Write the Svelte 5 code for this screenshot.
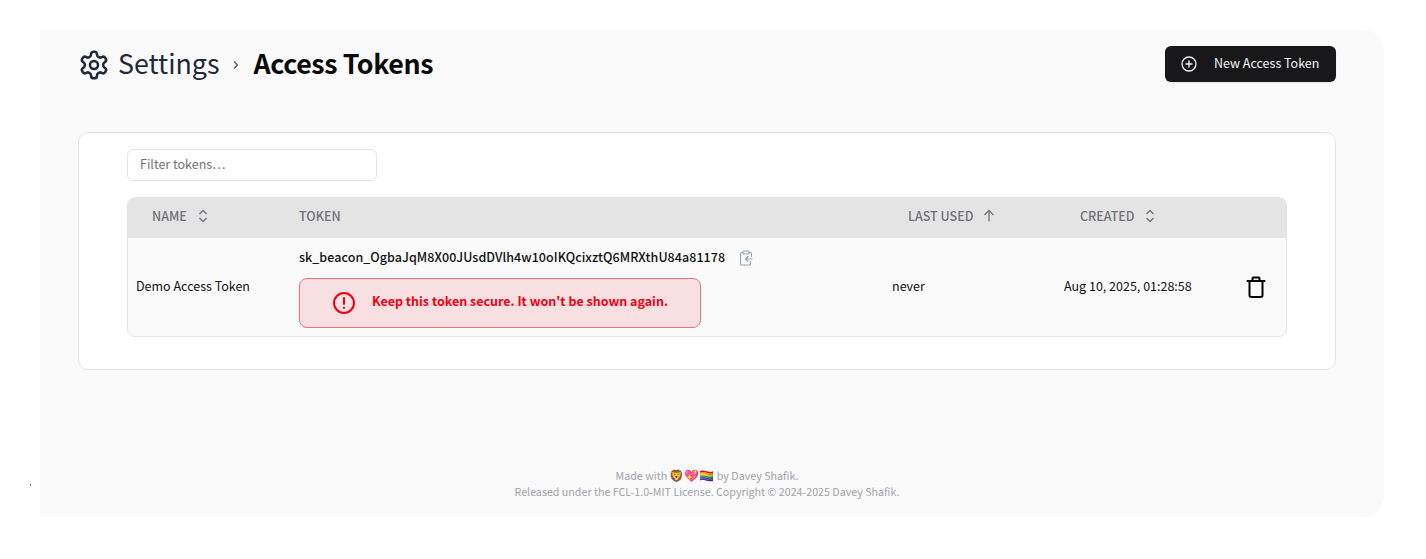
<script>
  const token = 'sk_beacon_OgbaJqM8X00JUsdDVlh4w10oIKQcixztQ6MRXthU84a81178';
</script>

<div class="page">
  <div class="rail"><span class="dot"></span></div>
  <main class="panel">
    <header class="topbar">
      <h1 class="crumbs">
        <svg class="gear" viewBox="0 0 24 24" fill="none" stroke="currentColor" stroke-width="1.9" stroke-linecap="round" stroke-linejoin="round" aria-hidden="true">
          <path d="M12.22 2h-.44a2 2 0 0 0-2 2v.18a2 2 0 0 1-1 1.73l-.43.25a2 2 0 0 1-2 0l-.15-.08a2 2 0 0 0-2.73.73l-.22.38a2 2 0 0 0 .73 2.73l.15.1a2 2 0 0 1 1 1.72v.51a2 2 0 0 1-1 1.74l-.15.09a2 2 0 0 0-.73 2.73l.22.38a2 2 0 0 0 2.73.73l.15-.08a2 2 0 0 1 2 0l.43.25a2 2 0 0 1 1 1.73V20a2 2 0 0 0 2 2h.44a2 2 0 0 0 2-2v-.18a2 2 0 0 1 1-1.73l.43-.25a2 2 0 0 1 2 0l.15.08a2 2 0 0 0 2.73-.73l.22-.39a2 2 0 0 0-.73-2.73l-.15-.08a2 2 0 0 1-1-1.74v-.5a2 2 0 0 1 1-1.74l.15-.09a2 2 0 0 0 .73-2.73l-.22-.38a2 2 0 0 0-2.73-.73l-.15.08a2 2 0 0 1-2 0l-.43-.25a2 2 0 0 1-1-1.73V4a2 2 0 0 0-2-2z"/>
          <circle cx="12" cy="12" r="3"/>
        </svg>
        <span class="parent">Settings</span>
        <svg class="chevron" viewBox="0 0 8 12" fill="none" stroke="currentColor" stroke-width="1.2" aria-hidden="true">
          <path d="M2 2.500 5.500 6 2 9.500"/>
        </svg>
        <span class="current">Access Tokens</span>
      </h1>
      <button class="new-btn" type="button">
        <svg class="plus" viewBox="0 0 16 16" fill="none" stroke="currentColor" stroke-width="1.3" stroke-linecap="round" aria-hidden="true">
          <circle cx="8" cy="8" r="7"/>
          <path d="M8 5v6M5 8h6"/>
        </svg>
        <span>New Access Token</span>
      </button>
    </header>

    <section class="card">
      <input class="filter" type="text" placeholder="Filter tokens…" />
      <div class="table-wrap">
        <table>
          <thead>
            <tr>
              <th class="c-name sortable">
                <span>Name</span>
                <svg viewBox="0 0 12 16" fill="none" stroke="currentColor" stroke-width="1.3" aria-hidden="true"><path d="m2.500 6 3.500-3.500L9.500 6M2.500 10 6 13.500 9.500 10"/></svg>
              </th>
              <th class="c-token">Token</th>
              <th class="c-used sortable">
                <span>Last Used</span>
                <svg viewBox="0 0 12 16" fill="none" stroke="currentColor" stroke-width="1.3" aria-hidden="true"><path d="M6 13.500v-11M1.500 7 6 2.500 10.500 7"/></svg>
              </th>
              <th class="c-created sortable">
                <span>Created</span>
                <svg viewBox="0 0 12 16" fill="none" stroke="currentColor" stroke-width="1.3" aria-hidden="true"><path d="m2.500 6 3.500-3.500L9.500 6M2.500 10 6 13.500 9.500 10"/></svg>
              </th>
              <th class="c-action"></th>
            </tr>
          </thead>
          <tbody>
            <tr>
              <td class="plain">Demo Access Token</td>
              <td>
                <div class="token-line">
                  <span class="token">{token}</span>
                  <svg class="copy" viewBox="0 0 16 16" fill="none" stroke="currentColor" stroke-width="1.1" stroke-linecap="round" stroke-linejoin="round" aria-hidden="true">
                    <path d="M5 2.500H3.500a1 1 0 0 0-1 1V14a1 1 0 0 0 1 1h8a1 1 0 0 0 1-1v-2.500M11 2.500h1.500a1 1 0 0 1 1 1v3"/>
                    <rect x="5" y="1" width="6" height="3" rx=".8"/>
                    <path d="M14 9H7.500M10 6.500 7.500 9l2.500 2.500"/>
                  </svg>
                </div>
                <div class="alert" role="alert">
                  <svg viewBox="0 0 24 24" fill="none" stroke="currentColor" stroke-width="2" stroke-linecap="round" aria-hidden="true">
                    <circle cx="12" cy="12" r="10"/>
                    <path d="M12 7v6M12 16.800v.1"/>
                  </svg>
                  <span>Keep this token secure. It won't be shown again.</span>
                </div>
              </td>
              <td class="plain">never</td>
              <td class="plain">Aug 10, 2025, 01:28:58</td>
              <td class="c-action">
                <svg class="trash" viewBox="0 0 24 24" fill="none" stroke="currentColor" stroke-width="2" stroke-linecap="round" stroke-linejoin="round" aria-hidden="true">
                  <path d="M3.500 6h17M8.500 6V3.500a1 1 0 0 1 1-1h5a1 1 0 0 1 1 1V6M5.500 6v14a2 2 0 0 0 2 2h9a2 2 0 0 0 2-2V6"/>
                </svg>
              </td>
            </tr>
          </tbody>
        </table>
      </div>
    </section>

    <footer class="foot">
      <div>Made with <span class="emoji">🦁💖🏳️‍🌈</span> by Davey Shafik.</div>
      <div>Released under the FCL-1.0-MIT License. Copyright © 2024-2025 Davey Shafik.</div>
    </footer>
  </main>
</div>

<style>
  :global(body) {
    margin: 0;
    background: #fff;
    font-family: "Noto Sans CJK SC", "Noto Sans", sans-serif;
    color: #111;
  }

  .page {
    display: flex;
    height: 559px;
    padding: 30px 42px 42px 0;
    box-sizing: border-box;
  }

  .rail {
    width: 40px;
    flex: none;
    position: relative;
  }

  .dot {
    position: absolute;
    left: 30px;
    top: 454px;
    width: 1px;
    height: 2px;
    background: #777;
  }

  .panel {
    flex: 1;
    display: flex;
    flex-direction: column;
    background: #fafafa;
    border-radius: 0 20px 20px 0;
    padding: 16px 48px 17px 38px;
    min-width: 0;
  }

  .topbar {
    display: flex;
    justify-content: space-between;
    align-items: center;
    height: 36px;
  }

  .crumbs {
    display: flex;
    align-items: center;
    margin: 0;
    font-size: 26.800px;
    line-height: 36px;
    font-weight: 400;
  }

  .crumbs span {
    padding-bottom: 2px;
  }

  .gear {
    width: 32px;
    height: 32px;
    color: #1e293b;
    margin-right: 8px;
    margin-top: 2px;
  }

  .parent {
    color: #1e293b;
  }

  .chevron {
    width: 8px;
    height: 12px;
    margin: 2px 14px 0 12px;
    color: #555;
  }

  .current {
    font-weight: 700;
    letter-spacing: -.4px;
    color: #0a0a0a;
  }

  .new-btn {
    display: flex;
    align-items: center;
    gap: 17px;
    width: 171px;
    height: 36px;
    padding: 0 16px;
    border: 0;
    border-radius: 6px;
    background: #18181b;
    color: #f4f4f5;
    font: 400 12.500px/20px "Noto Sans CJK SC", "Noto Sans", sans-serif;
    white-space: nowrap;
    box-shadow: 0 1px 2px rgba(0, 0, 0, .1);
    box-sizing: border-box;
  }

  .new-btn span {
    padding-bottom: 2px;
  }

  .plus {
    width: 16px;
    height: 16px;
    flex: none;
  }

  .card {
    margin-top: 50px;
    height: 238px;
    box-sizing: border-box;
    padding: 16px 48px;
    background: #fff;
    border: 1px solid #e5e5e5;
    border-radius: 10px;
  }

  .filter {
    display: block;
    width: 250px;
    height: 32px;
    box-sizing: border-box;
    padding: 0 12px 4px;
    border: 1px solid #e5e5e5;
    border-radius: 6px;
    background: #fff;
    font: 400 12.500px/20px "Noto Sans CJK SC", "Noto Sans", sans-serif;
    color: #111;
  }

  .filter::placeholder {
    color: #71717a;
    opacity: 1;
  }

  .table-wrap {
    margin-top: 16px;
    border: 1px solid #e5e5e5;
    border-radius: 8px;
    overflow: hidden;
    background: #fafafa;
  }

  table {
    width: 100%;
    table-layout: fixed;
    border-collapse: collapse;
    font-size: 12.500px;
  }

  th {
    height: 40px;
    padding: 0 8px 6px;
    background: #e4e4e4;
    color: #71717a;
    font-size: 12.500px;
    font-weight: 500;
    text-align: left;
    text-transform: uppercase;
    box-sizing: border-box;
  }

  th.sortable {
    padding-left: 24px;
  }

  th svg {
    width: 12px;
    height: 16px;
    margin-left: 7px;
    vertical-align: -3px;
  }

  td {
    padding: 8px;
    vertical-align: middle;
    color: #111;
  }

  td.plain {
    padding-bottom: 12px;
  }

  .c-name { width: 163px; }
  .c-used { width: 172px; }
  .c-created { width: 174px; }
  .c-action { width: 56px; }

  .c-token { width: auto; }

  .token-line {
    display: flex;
    align-items: center;
    gap: 13px;
    height: 24px;
  }

  .token {
    font-weight: 500;
    letter-spacing: .05px;
    padding-bottom: 3px;
  }

  .copy {
    width: 16px;
    height: 16px;
    color: #94a3b8;
  }

  .alert {
    display: flex;
    align-items: center;
    gap: 16px;
    width: 402px;
    height: 50px;
    box-sizing: border-box;
    margin-top: 8px;
    padding: 0 32px;
    background: #f8e0e2;
    border: 1px solid #ee6f78;
    border-radius: 8px;
    color: #f00010;
    font-size: 12.500px;
    font-weight: 700;
    white-space: nowrap;
  }

  .alert span {
    padding-bottom: 5px;
  }

  .alert svg {
    width: 24px;
    height: 24px;
    flex: none;
  }

  .trash {
    display: block;
    width: 24px;
    height: 24px;
    margin-left: 6px;
    color: #000;
  }

  .foot {
    margin-top: auto;
    text-align: center;
    color: #a1a1aa;
    font-size: 10.700px;
    line-height: 16px;
  }

  .emoji {
    font-family: "Noto Color Emoji", sans-serif;
    font-size: 12px;
  }
</style>
